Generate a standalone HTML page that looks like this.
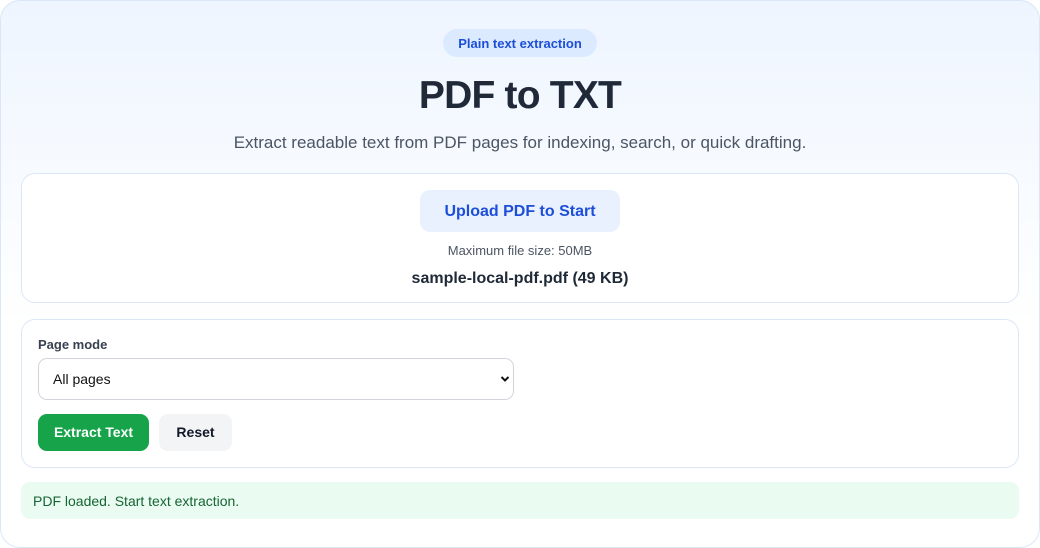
<!DOCTYPE html>
<html><head><meta charset="utf-8"><style>
*{box-sizing:border-box;margin:0;padding:0}
body{width:1040px;height:548px;background:#fff;font-family:"Liberation Sans",sans-serif;position:relative;overflow:hidden}
.outer{position:absolute;left:0;top:0;width:1040px;height:548px;border:1px solid #dbe7f7;border-radius:20px;background:linear-gradient(180deg,#eef5ff 0%,#ffffff 60%)}
.abs{position:absolute}
.badge{left:443px;top:29px;width:154px;height:28px;border-radius:14px;background:#dbeafe;color:#1d4ed8;font-size:13px;font-weight:bold;text-align:center;line-height:29px}
h1{position:absolute;left:0;width:1040px;top:71px;text-align:center;font-size:39px;font-weight:bold;color:#1f2937;letter-spacing:-0.8px;line-height:50px}
.sub{left:0;width:1040px;top:133px;text-align:center;font-size:17px;color:#4b5563;line-height:20px}
.card{left:21px;width:998px;border:1px solid #dbe7f7;border-radius:14px;background:#fff}
.up{left:420px;top:190px;width:200px;height:42px;border-radius:10px;background:#eaf1fe;color:#1d4ed8;font-size:16px;font-weight:bold;text-align:center;line-height:43px}
.max{left:0;width:1040px;top:243px;text-align:center;font-size:13px;color:#4b5563;line-height:16px}
.fn{left:0;width:1040px;top:269px;text-align:center;font-size:16px;font-weight:bold;color:#1f2937;line-height:20px}
.lbl{left:38px;top:337px;font-size:13px;font-weight:bold;color:#374151}
.sel{left:38px;top:358px;width:476px;height:42px;border:1px solid #d1d5db;border-radius:9px;background:#fff;font-size:14px;color:#111;line-height:40px;padding-left:14px}
.btn{top:414px;height:37px;border-radius:9px;font-size:14px;font-weight:bold;text-align:center;line-height:37px}
.st{left:21px;top:482px;width:998px;height:37px;border-radius:9px;background:#eafbf1;color:#166534;font-size:14px;line-height:38px;padding-left:12px}
</style></head><body>
<div class="outer"></div>
<div class="abs badge">Plain text extraction</div>
<h1>PDF to TXT</h1>
<div class="abs sub">Extract readable text from PDF pages for indexing, search, or quick drafting.</div>
<div class="abs card" style="top:173px;height:130px"></div>
<div class="abs up">Upload PDF to Start</div>
<div class="abs max">Maximum file size: 50MB</div>
<div class="abs fn">sample-local-pdf.pdf (49 KB)</div>
<div class="abs card" style="top:319px;height:149px"></div>
<div class="abs lbl">Page mode</div>
<div class="abs sel">All pages<svg style="position:absolute;right:3px;top:16px" width="10" height="8" viewBox="0 0 10 8"><path d="M1.5 2l3.5 3.5L8.5 2" stroke="#111" stroke-width="2" fill="none"/></svg></div>
<div class="abs btn" style="left:38px;width:111px;background:#16a34a;color:#fff">Extract Text</div>
<div class="abs btn" style="left:159px;width:73px;background:#f3f4f6;color:#111827">Reset</div>
<div class="abs st">PDF loaded. Start text extraction.</div>
</body></html>
